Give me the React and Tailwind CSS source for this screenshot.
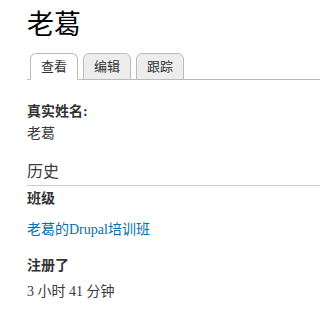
import React from "react";

const font = { fontFamily: '"Liberation Serif", "Noto Sans CJK SC", serif' };

function Tab({ label, active }) {
  return (
    <li
      className={
        "-mb-px rounded-t-[6px] border border-[#bbb] px-[10px] text-[13px] leading-[25px] text-[#333] " +
        (active ? "border-b-white bg-white" : "bg-[#ededed]")
      }
    >
      {label}
    </li>
  );
}

export default function App() {
  return (
    <div className="min-h-screen bg-white pl-[27px] pt-[8px] text-[#3b3b3b]" style={font}>
      <h1 className="text-[27px] leading-[34px] font-normal text-black">老葛</h1>

      <ul className="mt-[11px] flex gap-[5px] border-b border-[#bbb] pl-[3px]">
        <Tab label="查看" active />
        <Tab label="编辑" />
        <Tab label="跟踪" />
      </ul>

      <div className="mt-[21px] text-[14px] font-bold leading-[22px] text-[#333]">真实姓名:</div>
      <div className="text-[14px] leading-[22px]">老葛</div>

      <h3 className="mt-[16px] border-b border-[#ccc] pb-[2px] text-[16px] leading-[22px] font-normal">
        历史
      </h3>

      <div className="mt-[2px] text-[14px] font-bold leading-[22px] text-[#333]">班级</div>
      <a href="#" className="mt-[9px] block text-[14px] leading-[22px] text-[#0071b3]">
        老葛的Drupal培训班
      </a>

      <div className="mt-[14px] text-[14px] font-bold leading-[22px] text-[#333]">注册了</div>
      <div className="mt-[4px] text-[14px] leading-[22px]">3 小时 41 分钟</div>
    </div>
  );
}
